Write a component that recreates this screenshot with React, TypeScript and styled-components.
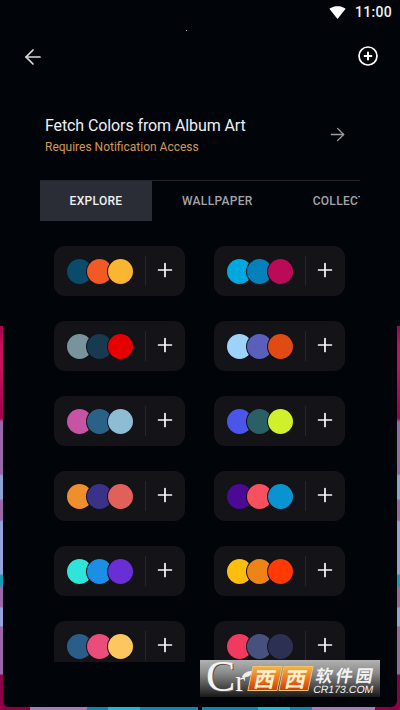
import React from 'react';
import styled, { createGlobalStyle } from 'styled-components';
import { ArrowLeft, ArrowRight, Plus } from 'lucide-react';

const GlobalStyle = createGlobalStyle`
  html, body {
    margin: 0;
    padding: 0;
    background: #010408;
  }
  * {
    box-sizing: border-box;
  }
`;

const sideStrip = `linear-gradient(180deg,
  #a8004f 0, #c4105f 5%, #c4105f 11%, #a5004c 24%,
  #9a68a6 25%, #9a68a6 38.5%, #8fa2d6 39%, #8fa2d6 45%,
  #9a68a6 45.5%, #9a68a6 50.5%, #93a2d8 51%, #93a2d8 64.5%,
  #0f9fb8 65%, #0f9fb8 67.5%, #9a68a6 68%, #9a68a6 73%,
  #93a2d8 73.5%, #93a2d8 78%, #9a68a6 78.5%, #9a68a6 90.5%,
  #8f0048 91%, #8f0048 100%)`;

const bottomStrip = `linear-gradient(90deg,
  #8f0048 0, #8f0048 30px, #a77db8 30px, #a77db8 87px,
  #0f86ad 87px, #0f86ad 108px, #1fb8d4 108px, #1fb8d4 140px,
  #0f86ad 140px, #0f86ad 198px, #010408 198px, #010408 202px,
  #0f86ad 202px, #0f86ad 258px, #1fb8d4 258px, #1fb8d4 290px,
  #0f86ad 290px, #0f86ad 312px, #a77db8 312px, #a77db8 375px,
  #8f0048 375px, #8f0048 100%)`;

const Page = styled.div`
  position: relative;
  width: 400px;
  height: 710px;
  overflow: hidden;
  background: #010408;
  font-family: Roboto, 'Liberation Sans', sans-serif;
  color: #fff;
`;

const EdgeFrame = styled.div`
  position: absolute;
  left: 0;
  right: 0;
  top: 326px;
  bottom: 0;
  background:
    ${sideStrip} left top / 3px 100% no-repeat,
    ${sideStrip} right top / 3px 100% no-repeat,
    ${bottomStrip} left bottom / 100% 3px no-repeat,
    #8f0048;
`;

const EdgeInner = styled.div`
  position: absolute;
  left: 3px;
  right: 3px;
  top: 0;
  bottom: 3px;
  background: #010408;
  border-radius: 0 0 6px 6px;
`;

const Content = styled.div`
  position: relative;
  display: flex;
  flex-direction: column;
  height: 100%;
`;

const StatusBar = styled.div`
  display: flex;
  align-items: center;
  justify-content: flex-end;
  gap: 9px;
  height: 24px;
  padding-right: 8px;
  font-size: 14px;
  font-weight: 500;
  letter-spacing: 0.3px;
  color: #f2f2f2;
`;

const Speck = styled.i`
  position: absolute;
  left: 186px;
  top: 30px;
  width: 1px;
  height: 1px;
  background: #aaa;
`;

const Header = styled.div`
  display: flex;
  align-items: center;
  justify-content: space-between;
  height: 40px;
  margin-top: 12px;
  padding: 0 22px 0 21px;
`;

const BackArrow = styled(ArrowLeft)`
  margin-top: 2px;
`;

const FetchRow = styled.div`
  display: flex;
  align-items: center;
  justify-content: space-between;
  margin-top: 40px;
  padding: 0 52px 0 45px;
`;

const FetchTitle = styled.div`
  font-size: 16px;
  line-height: 20px;
  letter-spacing: -0.1px;
  color: #f0f0f0;
`;

const FetchNote = styled.div`
  margin-top: 2px;
  font-size: 12px;
  line-height: 18px;
  color: #d49a55;
`;

const FetchArrow = styled(ArrowRight)`
  margin-bottom: 4px;
`;

const Tabs = styled.div`
  display: flex;
  height: 41px;
  margin: 24px 40px 0;
  border-top: 1px solid #23262e;
  overflow: hidden;
`;

const Tab = styled.div<{ $active?: boolean }>`
  flex: none;
  display: flex;
  align-items: center;
  justify-content: center;
  width: ${p => (p.$active ? '112px' : 'auto')};
  padding: 0 ${p => (p.$active ? '0' : '30px')};
  margin-top: ${p => (p.$active ? '-1px' : '0')};
  font-size: 12px;
  font-weight: 500;
  letter-spacing: 0.3px;
  white-space: nowrap;
  color: ${p => (p.$active ? '#f0f0f0' : '#a2a6aa')};
  background: ${p => (p.$active ? '#2a2c36' : 'transparent')};
`;

const Grid = styled.div`
  display: grid;
  grid-template-columns: 131px 131px;
  grid-auto-rows: 50px;
  column-gap: 29px;
  row-gap: 25px;
  height: 416px;
  margin-top: 25px;
  padding-left: 54px;
  overflow: hidden;
`;

const Card = styled.div`
  display: flex;
  align-items: center;
  padding-left: 12.5px;
  border-radius: 11px;
  background: #131318;
`;

const Swatches = styled.div`
  display: flex;
  width: 78.5px;
`;

const Swatch = styled.span<{ $color: string }>`
  width: 25px;
  height: 25px;
  border-radius: 50%;
  background: ${p => p.$color};
  box-shadow: 0 0 0 1px #131318;
  & + & {
    margin-left: -4.3px;
  }
`;

const Divider = styled.span`
  width: 1px;
  height: 30px;
  background: #26272c;
`;

const AddButton = styled.span`
  flex: 1;
  display: flex;
  align-items: center;
  justify-content: center;
  padding: 0 0.5px 2px 0;
  color: #f8f8f8;
`;

const Watermark = styled.div`
  position: absolute;
  left: 200px;
  top: 660px;
  width: 180px;
  height: 37px;
  display: flex;
  align-items: center;
  overflow: hidden;
  background: linear-gradient(180deg, #b2b2b2 0, #8b8b8b 35%, #454545 75%, #181818 100%);
`;

const MarkLogo = styled.span`
  flex: none;
  display: flex;
  align-items: baseline;
  width: 44px;
  margin-left: 6px;
  margin-top: 1px;
  font-family: 'Liberation Serif', serif;
  font-size: 44px;
  line-height: 36px;
  color: #f3f3f3;
  text-shadow: 1px 1px 0 #555;
`;

const MarkLogoTail = styled.span`
  font-size: 30px;
`;

const MarkLeaf = styled.svg`
  position: absolute;
  left: 42px;
  top: 11px;
`;

const MarkBadge = styled.span`
  position: relative;
  flex: none;
  display: flex;
  align-items: center;
  justify-content: center;
  width: 30px;
  height: 25px;
  margin-right: 1px;
  transform: skewX(-12deg);
  border: 1px solid #f4c46a;
  background: linear-gradient(180deg, #f6b23c 0, #ea6a1c 60%, #c9400f 100%);
  font-family: 'Noto Sans CJK SC', sans-serif;
  font-size: 21px;
  font-weight: 700;
  line-height: 1;
  color: #fff0d0;
`;

const MarkText = styled.div`
  display: flex;
  flex-direction: column;
  margin-left: 3px;
  margin-top: 2px;
  transform: skewX(-10deg);
  color: #f2f2f2;
  white-space: nowrap;
`;

const MarkCn = styled.span`
  font-family: 'Noto Sans CJK SC', sans-serif;
  font-size: 17px;
  font-weight: 700;
  line-height: 19px;
  letter-spacing: 3px;
`;

const MarkUrl = styled.span`
  font-family: 'Liberation Sans', sans-serif;
  font-size: 10.5px;
  line-height: 11px;
`;

const palettes = [
  ['#0a4a6a', '#f15a24', '#fbb631'],
  ['#00a8df', '#0480bb', '#bb0a57'],
  ['#78939c', '#173a50', '#e60000'],
  ['#9dd3f8', '#5a5fbb', '#e04a13'],
  ['#c653a3', '#2a6287', '#8dbcd4'],
  ['#4a55ea', '#2a5f66', '#cff02a'],
  ['#ee8e2c', '#3a3289', '#e2605a'],
  ['#4b0a95', '#f8505f', '#0a93d1'],
  ['#2fe5da', '#1a8fe5', '#6a2ed6'],
  ['#ffbd0e', '#ee8318', '#ff3a05'],
  ['#2a5d88', '#ea4d7a', '#fdc65f'],
  ['#f03a60', '#47527c', '#2c3154'],
];

const WifiIcon = () => (
  <svg width="17" height="17" viewBox="0 0 24 24" fill="#fff">
    <path d="M12 21l11.5-14.3C23.1 6.3 18.7 3 12 3 5.3 3 .9 6.3.5 6.7L12 21z" />
  </svg>
);

const AddCircleIcon = () => (
  <svg width="20" height="20" viewBox="0 0 20 20" fill="none" stroke="#fff">
    <circle cx="10" cy="10" r="9" strokeWidth="1.7" />
    <path d="M10 5.8v8.4M5.8 10h8.4" strokeWidth="2" />
  </svg>
);

const App: React.FC = () => {
  return (
    <Page>
      <GlobalStyle />
      <EdgeFrame>
        <EdgeInner />
      </EdgeFrame>
      <Content>
        <StatusBar>
          <WifiIcon />
          11:00
        </StatusBar>
        <Speck />
        <Header>
          <BackArrow size={24} strokeWidth={1.7} color="#dcdcdc" />
          <AddCircleIcon />
        </Header>
        <FetchRow>
          <div>
            <FetchTitle>Fetch Colors from Album Art</FetchTitle>
            <FetchNote>Requires Notification Access</FetchNote>
          </div>
          <FetchArrow size={21} strokeWidth={1.5} color="#a0a0a0" />
        </FetchRow>
        <Tabs>
          <Tab $active>EXPLORE</Tab>
          <Tab>WALLPAPER</Tab>
          <Tab>COLLECTIONS</Tab>
        </Tabs>
        <Grid>
          {palettes.map((colors, i) => (
            <Card key={i}>
              <Swatches>
                {colors.map(c => (
                  <Swatch key={c} $color={c} />
                ))}
              </Swatches>
              <Divider />
              <AddButton>
                <Plus size={22} strokeWidth={1.9} />
              </AddButton>
            </Card>
          ))}
        </Grid>
      </Content>
      <Watermark>
        <MarkLogo>
          C<MarkLogoTail>r</MarkLogoTail>
        </MarkLogo>
        <MarkLeaf width="11" height="7" viewBox="0 0 11 7">
          <path d="M0 6C2 1 6 0 11 0 10 4 6 7 0 6z" fill="#eee" />
        </MarkLeaf>
        <MarkBadge>西</MarkBadge>
        <MarkBadge>西</MarkBadge>
        <MarkText>
          <MarkCn>软件园</MarkCn>
          <MarkUrl>CR173.COM</MarkUrl>
        </MarkText>
      </Watermark>
    </Page>
  );
};

export default App;
